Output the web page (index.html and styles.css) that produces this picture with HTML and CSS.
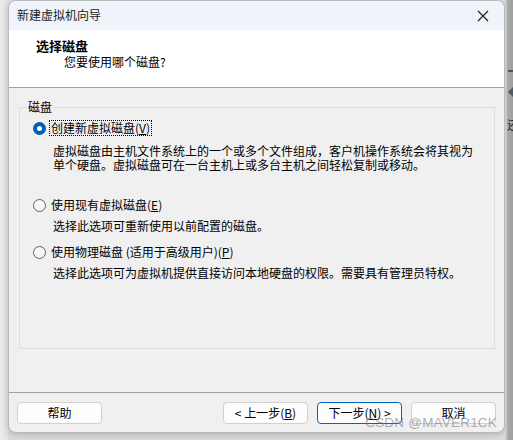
FILE: index.html
```html
<!DOCTYPE html>
<html lang="zh-CN">
<head>
<meta charset="utf-8">
<title>新建虚拟机向导</title>
<link rel="stylesheet" href="styles.css">
</head>
<body>
<div class="desk-left"></div>
<div class="window">
  <div class="titlebar">
    <span class="title">新建虚拟机向导</span>
    <svg class="close" width="12" height="12" viewBox="0 0 12 12"><path d="M1 1 L11 11 M11 1 L1 11" stroke="#1a1a1a" stroke-width="1.1" fill="none"/></svg>
  </div>
  <div class="header">
    <div class="h-title">选择磁盘</div>
    <div class="h-sub">您要使用哪个磁盘?</div>
  </div>
  <div class="content">
    <fieldset class="group">
      <legend>磁盘</legend>
      <div class="option opt1">
        <span class="radio checked"></span>
        <span class="label focus">创建新虚拟磁盘(<u>V</u>)</span>
      </div>
      <div class="desc d1">虚拟磁盘由主机文件系统上的一个或多个文件组成，客户机操作系统会将其视为<br>单个硬盘。虚拟磁盘可在一台主机上或多台主机之间轻松复制或移动。</div>
      <div class="option opt2">
        <span class="radio"></span>
        <span class="label">使用现有虚拟磁盘(<u>E</u>)</span>
      </div>
      <div class="desc">选择此选项可重新使用以前配置的磁盘。</div>
      <div class="option opt3">
        <span class="radio"></span>
        <span class="label">使用物理磁盘 (适用于高级用户)(<u>P</u>)</span>
      </div>
      <div class="desc">选择此选项可为虚拟机提供直接访问本地硬盘的权限。需要具有管理员特权。</div>
    </fieldset>
  </div>
  <div class="footer">
    <button class="btn">帮助</button>
    <div class="spacer"></div>
    <button class="btn">&lt; 上一步(<u>B</u>)</button>
    <button class="btn primary">下一步(<u>N</u>) &gt;</button>
    <button class="btn">取消</button>
  </div>
  <div class="watermark">CSDN @MAVER1CK</div>
</div>
<div class="desk-right">
  <div class="rbar"></div>
  <div class="rarrow"></div>
  <div class="rglyph">还</div>
</div>
</body>
</html>
```
FILE: styles.css
```css
html, body {
  margin: 0;
  padding: 0;
}
body {
  width: 513px;
  height: 440px;
  overflow: hidden;
  display: flex;
  align-items: flex-start;
  background: #dcdcdc;
  font-family: "Noto Sans CJK SC", "Microsoft YaHei", sans-serif;
  font-size: 12px;
  color: #000;
}
.desk-left {
  width: 8px;
  height: 440px;
  flex: none;
  background: linear-gradient(to right, #ececec, #e0e0e0);
}
.window {
  position: relative;
  flex: none;
  width: 497px;
  height: 433px;
  box-sizing: border-box;
  border: 1px solid #b9b9b9;
  border-radius: 8px;
  background: #f0f0f0;
  display: flex;
  flex-direction: column;
  overflow: hidden;
  box-shadow: 0 2px 6px rgba(0,0,0,0.18);
}
.titlebar {
  height: 29px;
  flex: none;
  background: #eef4f9;
  display: flex;
  align-items: center;
  padding: 0 10px 0 8px;
}
.title {
  flex: 1;
  line-height: 16px;
  font-size: 12px;
  color: #1b1b1b;
  margin-top: -1px;
}
.close {
  display: block;
  margin-right: 5px;
}
.header {
  flex: none;
  box-sizing: border-box;
  background: #fff;
  border-bottom: 1px solid #a0a0a0;
  padding: 8px 0 0 27px;
  height: 58px;
}
.h-title {
  font-weight: bold;
  font-size: 13px;
  line-height: 16px;
}
.h-sub {
  padding-left: 28px;
  line-height: 16px;
}
.content {
  flex: 1;
  padding: 11px 9px 0 10px;
}
.group {
  margin: 0;
  border: 1px solid #dcdcdc;
  padding: 5px 0 0 13px;
  height: 250px;
  box-sizing: border-box;
}
.group legend {
  padding: 0 2px;
  margin-left: -7px;
  line-height: 16px;
}
.option {
  display: flex;
  align-items: center;
  height: 16px;
  line-height: 16px;
}
.opt2 { margin-top: 25px; }
.opt3 { margin-top: 11px; }
.radio {
  width: 13px;
  height: 13px;
  box-sizing: border-box;
  border-radius: 50%;
  border: 1px solid #5f5f5f;
  background: #f7f7f7;
  flex: none;
  margin-right: 3px;
}
.radio.checked {
  border: 4px solid #005fb8;
  background: #fff;
}
.label {
  padding: 0 1px;
  border: 1px dotted transparent;
}
.label.focus {
  border-color: #000;
  line-height: 14px;
}
.desc {
  margin-left: 20px;
  margin-top: 6px;
  line-height: 14px;
}
.desc.d1 { margin-top: 8px; }
u {
  text-decoration: underline;
  text-underline-offset: 1px;
}
.footer {
  flex: none;
  height: 40px;
  box-sizing: border-box;
  border-top: 1px solid #a0a0a0;
  display: flex;
  align-items: flex-start;
  gap: 9px;
  padding: 9px 8px 0 8px;
}
.spacer { flex: 1; }
.btn {
  width: 85px;
  height: 22px;
  box-sizing: border-box;
  border: 1px solid #d0d0d0;
  border-radius: 4px;
  background: #fdfdfd;
  font-family: "Noto Sans CJK SC", "Microsoft YaHei", sans-serif;
  font-size: 12px;
  color: #000;
  padding: 0;
  line-height: 18px;
}
.btn.primary {
  border-color: #0067c0;
}
.watermark {
  position: absolute;
  right: 7px;
  bottom: 1px;
  font-family: "Liberation Sans", Arial, sans-serif;
  font-size: 13.5px;
  line-height: 16px;
  color: rgba(120,120,120,0.6);
  letter-spacing: 0.2px;
}
.desk-right {
  position: relative;
  flex: 1;
  height: 440px;
  background: linear-gradient(to right, #d8d8d8 0, #a8a8a8 3px, #9e9e9e 100%);
}
.rbar {
  position: absolute;
  left: 3px;
  top: 70px;
  width: 5px;
  height: 2px;
  background: #555;
}
.rarrow {
  position: absolute;
  left: 3px;
  top: 86px;
  width: 0;
  height: 0;
  border-top: 6px solid transparent;
  border-bottom: 6px solid transparent;
  border-right: 6px solid #4a5a6a;
}
.rglyph {
  position: absolute;
  left: 2px;
  top: 117px;
  font-size: 12px;
  line-height: 16px;
  color: #222;
}
```
